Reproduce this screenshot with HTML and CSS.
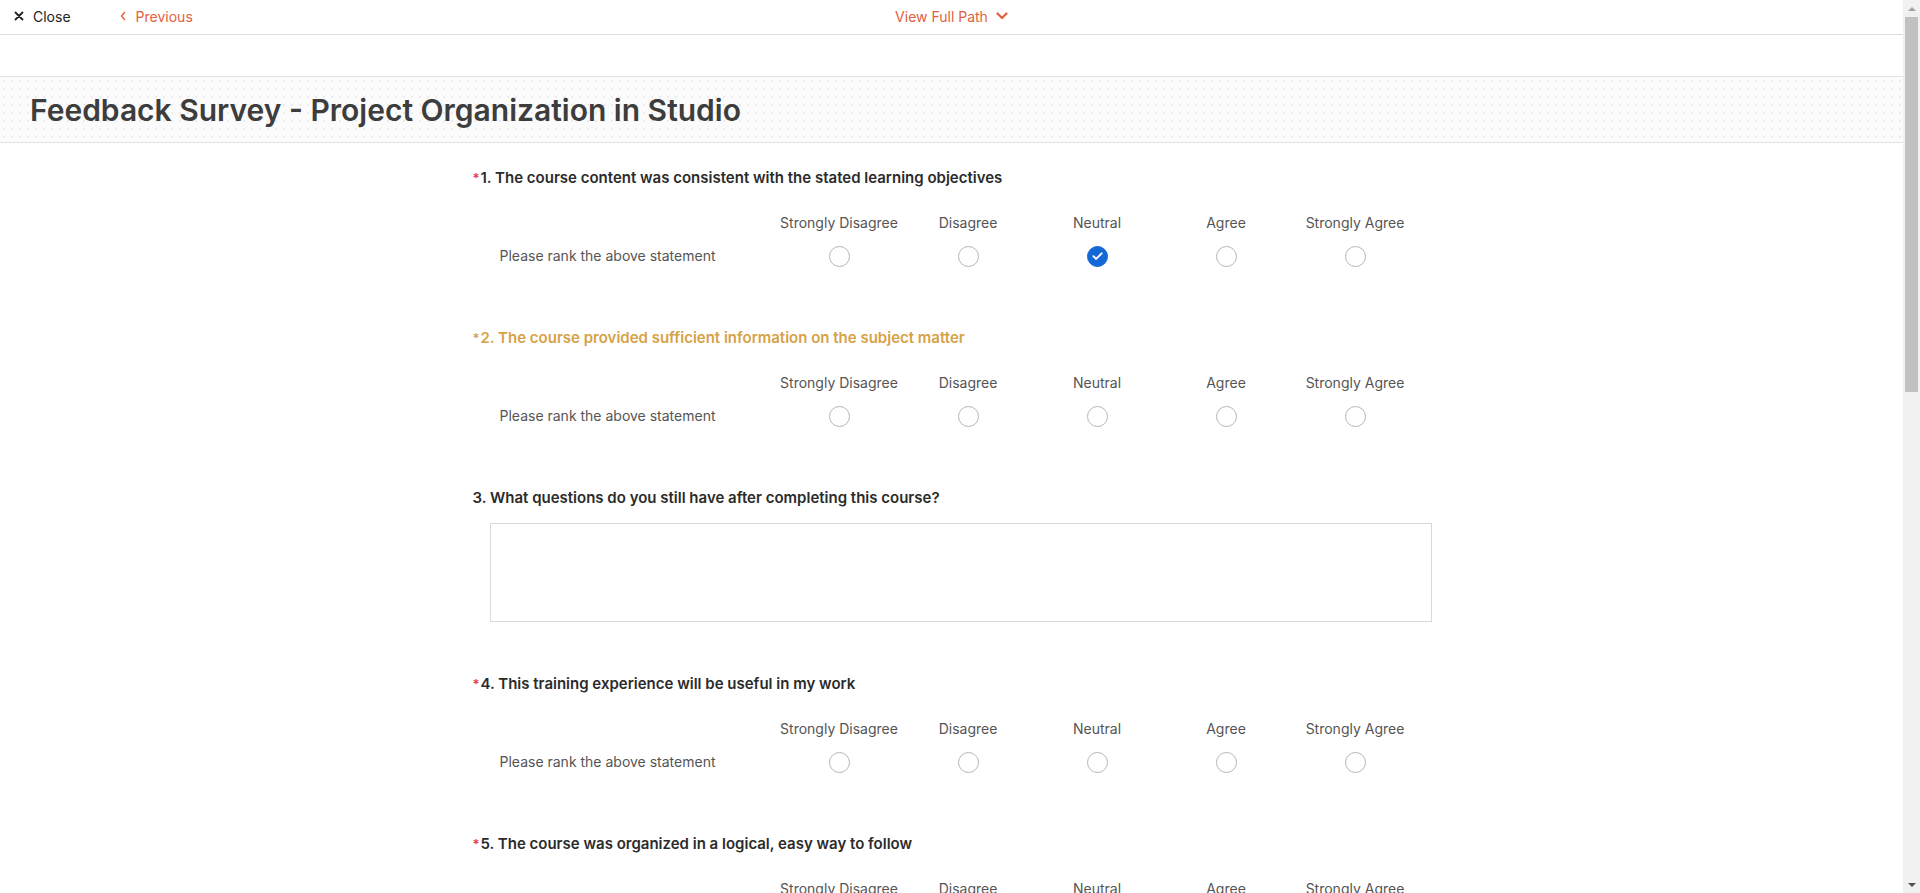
FILE: index.html
```html
<!DOCTYPE html>
<html lang="en">
<head>
<meta charset="utf-8">
<title>Feedback Survey - Project Organization in Studio</title>
<link rel="stylesheet" href="styles.css">
</head>
<body>
<div class="app">
<div class="viewport">
<header class="topbar">
  <div class="topbar-left">
    <a class="nav-close" href="#">
      <svg class="icon-x" viewBox="0 0 10 10" width="10" height="10"><path d="M1.5 1.5 L8.5 8.5 M8.5 1.5 L1.5 8.5" stroke="#222" stroke-width="1.8" stroke-linecap="round"/></svg>
      <span>Close</span>
    </a>
    <a class="nav-prev" href="#">
      <svg class="icon-lt" viewBox="0 0 6 10" width="6" height="10"><path d="M4.5 1.5 L1.5 5 L4.5 8.5" fill="none" stroke="#e4603e" stroke-width="1.4" stroke-linecap="round" stroke-linejoin="round"/></svg>
      <span>Previous</span>
    </a>
  </div>
  <a class="nav-path" href="#">
    <span>View Full Path</span>
    <svg class="icon-down" viewBox="0 0 12 8" width="12" height="8"><path d="M1.5 1.5 L6 6 L10.5 1.5" fill="none" stroke="#e4603e" stroke-width="2.2" stroke-linecap="round" stroke-linejoin="round"/></svg>
  </a>
</header>

<section class="title-band">
  <h1 class="page-title">Feedback Survey - Project Organization in Studio</h1>
</section>

<main class="survey">
  <div class="question">
    <h2 class="q-title"><span class="req">*</span>1. The course content was consistent with the stated learning objectives</h2>
    <div class="matrix">
      <div class="m-head"></div>
      <div class="m-head">Strongly Disagree</div>
      <div class="m-head">Disagree</div>
      <div class="m-head">Neutral</div>
      <div class="m-head">Agree</div>
      <div class="m-head">Strongly Agree</div>
      <div class="m-row-label">Please rank the above statement</div>
      <div class="m-cell"><span class="radio"></span></div>
      <div class="m-cell"><span class="radio"></span></div>
      <div class="m-cell"><span class="radio checked"><svg viewBox="0 0 20 20" width="20" height="20"><path d="M5.6 10.2 L8.6 13.1 L14.4 7.2" fill="none" stroke="#fff" stroke-width="2" stroke-linecap="round" stroke-linejoin="round"/></svg></span></div>
      <div class="m-cell"><span class="radio"></span></div>
      <div class="m-cell"><span class="radio"></span></div>
    </div>
  </div>

  <div class="question">
    <h2 class="q-title warn"><span class="req warn">*</span>2. The course provided sufficient information on the subject matter</h2>
    <div class="matrix">
      <div class="m-head"></div>
      <div class="m-head">Strongly Disagree</div>
      <div class="m-head">Disagree</div>
      <div class="m-head">Neutral</div>
      <div class="m-head">Agree</div>
      <div class="m-head">Strongly Agree</div>
      <div class="m-row-label">Please rank the above statement</div>
      <div class="m-cell"><span class="radio"></span></div>
      <div class="m-cell"><span class="radio"></span></div>
      <div class="m-cell"><span class="radio"></span></div>
      <div class="m-cell"><span class="radio"></span></div>
      <div class="m-cell"><span class="radio"></span></div>
    </div>
  </div>

  <div class="question question-text">
    <h2 class="q-title">3. What questions do you still have after completing this course?</h2>
    <textarea class="answer"></textarea>
  </div>

  <div class="question">
    <h2 class="q-title"><span class="req">*</span>4. This training experience will be useful in my work</h2>
    <div class="matrix">
      <div class="m-head"></div>
      <div class="m-head">Strongly Disagree</div>
      <div class="m-head">Disagree</div>
      <div class="m-head">Neutral</div>
      <div class="m-head">Agree</div>
      <div class="m-head">Strongly Agree</div>
      <div class="m-row-label">Please rank the above statement</div>
      <div class="m-cell"><span class="radio"></span></div>
      <div class="m-cell"><span class="radio"></span></div>
      <div class="m-cell"><span class="radio"></span></div>
      <div class="m-cell"><span class="radio"></span></div>
      <div class="m-cell"><span class="radio"></span></div>
    </div>
  </div>

  <div class="question">
    <h2 class="q-title"><span class="req">*</span>5. The course was organized in a logical, easy way to follow</h2>
    <div class="matrix">
      <div class="m-head"></div>
      <div class="m-head">Strongly Disagree</div>
      <div class="m-head">Disagree</div>
      <div class="m-head">Neutral</div>
      <div class="m-head">Agree</div>
      <div class="m-head">Strongly Agree</div>
      <div class="m-row-label">Please rank the above statement</div>
      <div class="m-cell"><span class="radio"></span></div>
      <div class="m-cell"><span class="radio"></span></div>
      <div class="m-cell"><span class="radio"></span></div>
      <div class="m-cell"><span class="radio"></span></div>
      <div class="m-cell"><span class="radio"></span></div>
    </div>
  </div>
</main>
</div>

<div class="scrollbar" aria-hidden="true">
  <div class="sb-btn"><span class="sb-up"></span></div>
  <div class="sb-track">
    <div class="sb-thumb"></div>
  </div>
  <div class="sb-btn"><span class="sb-down"></span></div>
</div>
</div>
</body>
</html>
```

FILE: styles.css
```css
* { box-sizing: border-box; }

html, body {
  margin: 0;
  padding: 0;
  background: #fff;
  height: 100%;
  overflow: hidden;
}

body {
  font-family: Inter, "Noto Sans", "Liberation Sans", sans-serif;
  color: #333;
  font-size: 14px;
}

.app {
  display: flex;
  height: 100vh;
}

.viewport {
  flex: 1;
  min-width: 0;
  overflow: hidden;
}

/* scrollbar drawn at the right edge */
.scrollbar {
  width: 17px;
  flex: none;
  background: #f1f1f1;
  display: flex;
  flex-direction: column;
}

.sb-btn {
  height: 17px;
  flex: none;
  display: flex;
  align-items: center;
  justify-content: center;
}

.sb-up {
  width: 0;
  height: 0;
  border-left: 4px solid transparent;
  border-right: 4px solid transparent;
  border-bottom: 4px solid #a3a3a3;
}

.sb-down {
  width: 0;
  height: 0;
  border-left: 4px solid transparent;
  border-right: 4px solid transparent;
  border-top: 4px solid #505050;
}

.sb-track {
  flex: 1;
  padding: 0 2px;
}

.sb-thumb {
  height: 375px;
  background: #c1c1c1;
}

a { text-decoration: none; }

.topbar {
  height: 35px;
  border-bottom: 1px solid #dcdcdc;
  display: flex;
  align-items: center;
  justify-content: center;
  position: relative;
  padding-bottom: 2px;
}

.topbar-left {
  position: absolute;
  left: 14px;
  top: 0;
  height: 32px;
  display: flex;
  align-items: center;
  gap: 49px;
}

.nav-close {
  display: flex;
  align-items: center;
  gap: 9px;
  color: #222;
  font-size: 14px;
}

.nav-prev {
  display: flex;
  align-items: center;
  gap: 10px;
  color: #e4603e;
  font-size: 14px;
}

.nav-path {
  display: flex;
  align-items: center;
  gap: 8px;
  color: #e4603e;
  font-size: 14px;
}

.title-band {
  margin-top: 41px;
  height: 67px;
  border-top: 1px solid #e2e2e2;
  border-bottom: 1px solid #e2e2e2;
  background-color: #fbfbfb;
  background-image: radial-gradient(circle, #ececec 1px, transparent 1.2px);
  background-size: 8px 8px;
  display: flex;
  align-items: center;
  padding-left: 30px;
}

.page-title {
  margin: 0;
  font-size: 30px;
  font-weight: 600;
  color: #3d3d3d;
  letter-spacing: 0;
}

.survey {
  width: 958px;
  margin: 25px auto 0;
  padding-bottom: 40px;
}

.question {
  margin-bottom: 62px;
}

.question-text {
  margin-bottom: 52px;
}

.q-title {
  margin: 0;
  font-size: 15px;
  line-height: 20px;
  font-weight: 600;
  color: #2b2b2b;
  display: flex;
  align-items: baseline;
}

.q-title.warn { color: #d6a246; }

.req {
  color: #e53935;
  font-size: 13px;
  width: 8px;
}

.req.warn { color: #d6a246; }

.matrix {
  margin-top: 25px;
  display: grid;
  grid-template-columns: 302px repeat(5, 129px);
  grid-template-rows: 20px 20px;
  row-gap: 13px;
  align-items: center;
}

.m-head {
  text-align: center;
  font-size: 14px;
  line-height: 20px;
  color: #555;
}

.m-row-label {
  padding-left: 27px;
  font-size: 14px;
  color: #555;
  line-height: 20px;
}

.m-cell {
  display: flex;
  justify-content: center;
  align-items: center;
}

.radio {
  width: 21px;
  height: 21px;
  border-radius: 50%;
  border: 1px solid #b5b5b5;
  background: #fff;
  display: inline-flex;
  align-items: center;
  justify-content: center;
}

.radio.checked {
  background: #1467d6;
  border-color: #1467d6;
}

.answer {
  display: block;
  margin: 15px 0 0 17px;
  width: 942px;
  height: 99px;
  border: 1px solid #d9d9d9;
  border-radius: 0;
  resize: none;
  font-family: inherit;
  font-size: 14px;
}
```
